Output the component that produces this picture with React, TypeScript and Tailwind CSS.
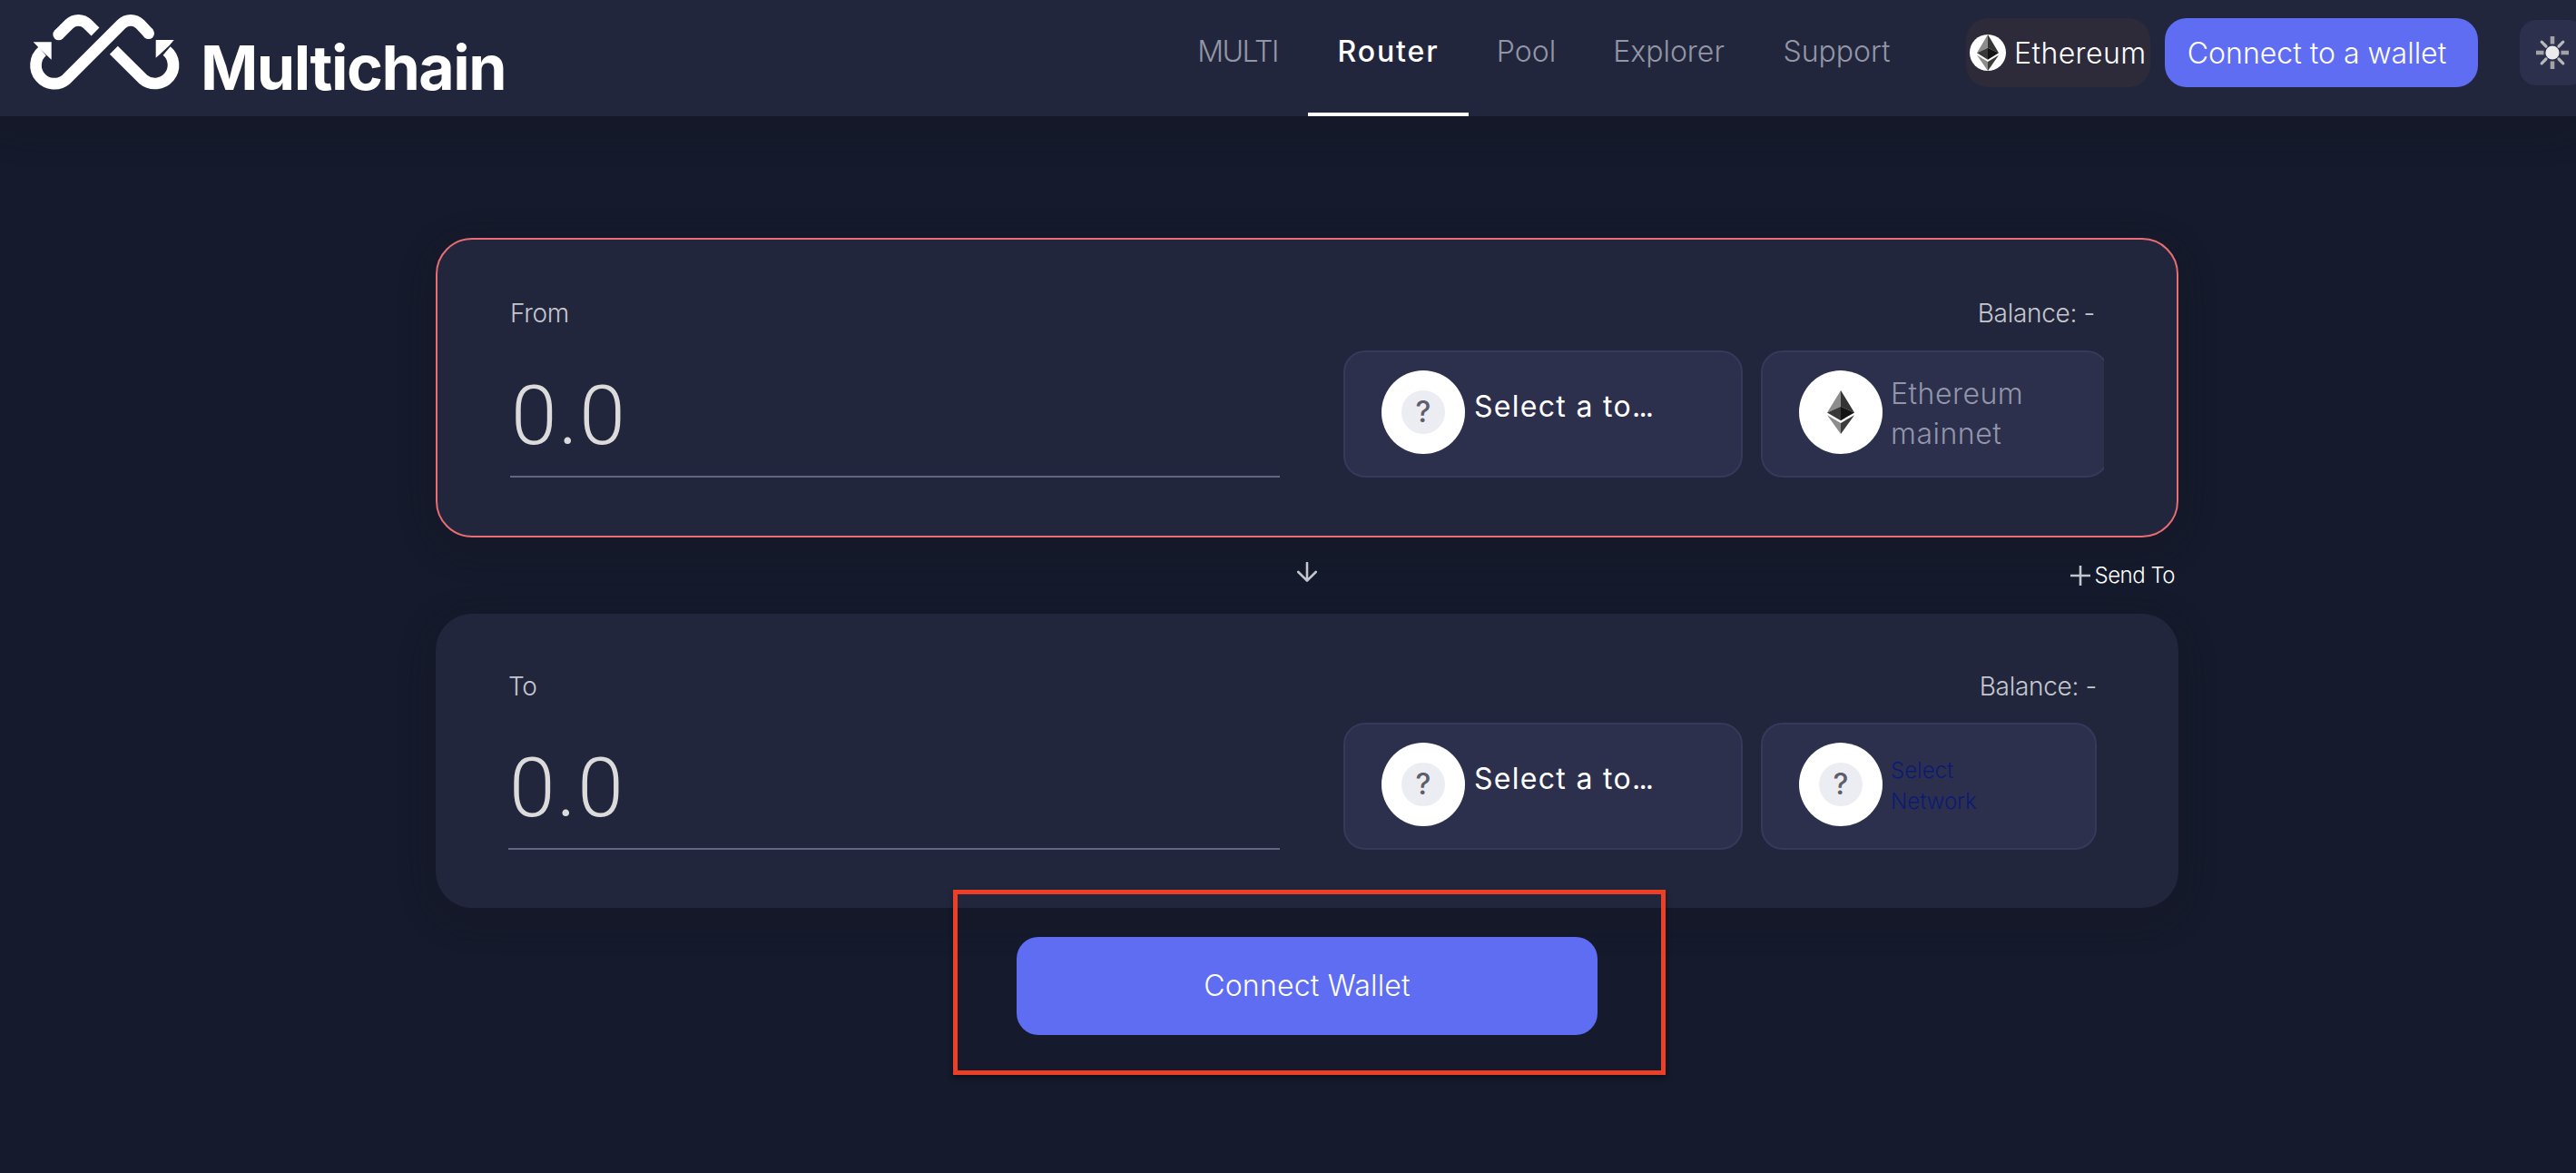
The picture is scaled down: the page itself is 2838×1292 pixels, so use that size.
import React from 'react';

const NAV_ITEMS = [
  { label: 'MULTI', box: 'w-[153px] pr-[2px] tracking-[-1.5px]' },
  { label: 'Router', box: 'w-[177px] tracking-[1.9px]', active: true },
  { label: 'Pool', box: 'w-[129px] pr-[2px]' },
  { label: 'Explorer', box: 'w-[185px] pr-[2px]' },
  { label: 'Support', box: 'w-[184px] pr-px' },
];

const LogoMark = () => (
  <svg viewBox="36 48 501 252" className="w-[167px] h-[84px] mt-4" fill="none" stroke="#fff" strokeWidth="38">
    <path d="M134 114L168.600 79.600A43 43 0 0 1 229.400 79.600L255 105" />
    <path d="M80 169A61 61 0 1 0 159 262L341.600 79.600A43 43 0 0 1 402.400 79.600L431 110" />
    <path d="M316 166L413 262A61 61 0 1 0 491 168" />
    <g fill="#fff" stroke="none">
      <circle cx="134" cy="114" r="19" />
      <circle cx="431" cy="110" r="19" />
      <path d="M50 139H110V197L94 182L66 155Z" />
      <path d="M515 132H455V191L471 177L500 150Z" />
    </g>
  </svg>
);

const EthIcon: React.FC<{ className?: string }> = ({ className }) => (
  <svg viewBox="0 0 256 417" className={className} preserveAspectRatio="none">
    <path fill="#343434" d="M128 0L256 212L128 154Z" />
    <path fill="#8c8c8c" d="M128 0L0 212L128 154Z" />
    <path fill="#141414" d="M128 154L256 212L128 288Z" />
    <path fill="#393939" d="M128 154L0 212L128 288Z" />
    <path fill="#3c3c3b" d="M128 312L256 237L128 417Z" />
    <path fill="#8c8c8c" d="M128 312L0 237L128 417Z" />
  </svg>
);

const SunIcon = () => (
  <svg viewBox="0 0 36 36" className="w-9 h-9">
    <g stroke="#a3a3a6" strokeWidth="4.600">
      <path d="M18 0V8.500M18 27.500V36M0 18H8.500M27.500 18H36" />
    </g>
    <g stroke="#b9b9b8" strokeWidth="3.200" strokeLinecap="round">
      <path d="M6.200 6.200L11 11M29.800 6.200L25 11M6.200 29.800L11 25M29.800 29.800L25 25" />
    </g>
    <circle cx="18" cy="18" r="7.600" fill="#ebebeb" />
  </svg>
);

const Header = () => (
  <header className="relative flex h-[128px] bg-[#22263c] shadow-[0_10px_40px_rgba(24,20,34,0.3)]">
    <div className="flex pl-8">
      <LogoMark />
      <span className="ml-[22px] mt-[34px] h-20 text-[68px] leading-[80px] font-bold tracking-[-1.5px] text-white">Multichain</span>
    </div>

    <div className="flex ml-auto -mr-[10px] shrink-0">
      <nav className="flex">
        {NAV_ITEMS.map((item) => (
          <a
            key={item.label}
            className={`flex h-[128px] items-center justify-center pb-[11px] border-b-4 text-[32px] ${item.box} ${item.active ? 'border-white text-white font-medium' : 'border-transparent text-[#9296a6] font-light'}`}
          >
            {item.label}
          </a>
        ))}
      </nav>

      <button className="ml-[50px] mt-5 flex h-[76px] w-[203px] items-center rounded-[24px] bg-[#2d2a3a] pl-1 text-[32px] font-light text-white">
        <span className="flex h-10 w-10 shrink-0 items-center justify-center rounded-full bg-white">
          <EthIcon className="h-10 w-6" />
        </span>
        <span className="ml-[9px] pt-[2px] tracking-[0.4px]">Ethereum</span>
      </button>

      <button className="ml-4 mt-5 h-[76px] w-[345px] rounded-[24px] bg-[#5f6df3] pt-[2px] pr-[10px] text-[32px] font-light text-white whitespace-nowrap">
        Connect to a wallet
      </button>

      <button className="ml-[46px] mt-[22px] flex h-[72px] w-[72px] items-center justify-center rounded-[18px] bg-[#2c304d]">
        <SunIcon />
      </button>
    </div>
  </header>
);

const Coin: React.FC<{ eth?: boolean }> = ({ eth }) => (
  <span className="mb-1 flex h-[92px] w-[92px] shrink-0 items-center justify-center rounded-full bg-white">
    {eth ? (
      <EthIcon className="h-12 w-[30px]" />
    ) : (
      <span className="flex h-12 w-12 items-center justify-center rounded-full bg-[#ecedf2] text-[32px] leading-none font-medium text-[#5d5d6c]">?</span>
    )}
  </span>
);

interface SwapCardProps {
  label: string;
  card: string;
  labelRow: string;
  network: React.ReactNode;
}

const SwapCard: React.FC<SwapCardProps> = ({ label, card, labelRow, network }) => (
  <section className={`w-[1920px] rounded-[40px] bg-[#22263c] px-20 pt-[60px] shadow-[0_10px_40px_rgba(24,20,34,0.3)] ${card}`}>
    <div className={`mb-5 flex items-center justify-between text-[28px] font-light tracking-[-0.3px] text-[#c5c7ce] ${labelRow}`}>
      <span>{label}</span>
      <span className="pb-px">Balance: -</span>
    </div>
    <div className="flex overflow-hidden">
      <div className="flex h-[140px] flex-1 items-center border-b-2 border-[#5f6880] pl-px pt-[7px] font-[Roboto] text-[91px] leading-none font-[350] tracking-[1.5px] text-[#dbdbdb]">
        0.0
      </div>
      <button className="ml-[70px] flex h-[140px] w-[440px] shrink-0 items-center rounded-[24px] border-2 border-[#353a5a] bg-[#2c304d] pl-10">
        <Coin />
        <span className="ml-[10px] mb-4 text-[32px] font-[430] tracking-[1.3px] text-white">
          Select a to<span className="tracking-[-1.8px]">...</span>
        </span>
      </button>
      {network}
    </div>
  </section>
);

export default function App() {
  return (
    <div className="h-[1292px] w-full overflow-hidden bg-[#151a2c] font-[Inter,sans-serif]">
      <Header />

      <main className="flex flex-col items-center pl-[42px] pt-[134px]">
        <SwapCard
          label="From"
          card="h-[330px] border-2 border-[#e96d72]"
          labelRow="h-[42px] pr-[10px]"
          network={
            <button className="-mr-[5px] ml-5 flex h-[140px] w-[383px] shrink-0 items-center rounded-[24px] border-2 border-[#353a5a] bg-[#2c304d] pl-10 text-left">
              <Coin eth />
              <span className="ml-[9px] w-[200px] text-[32px] leading-[44px] font-light tracking-[0.5px] text-[#9296ab]">Ethereum mainnet</span>
            </button>
          }
        />

        <div className="grid h-[84px] w-[1920px] grid-cols-3 items-center">
          <span />
          <svg viewBox="0 0 22 22" className="mx-auto mb-2 h-[22px] w-[22px]" fill="none" stroke="#c4c6ce" strokeWidth="2.600" strokeLinecap="round" strokeLinejoin="round">
            <path d="M11 1V20.500M1.300 11L11 20.700L20.700 11" />
          </svg>
          <div className="flex items-center justify-end pr-1 text-[24px] text-white">
            <svg viewBox="0 0 22 22" className="mr-1 h-[22px] w-[22px]" stroke="#c4c6ce" strokeWidth="2.600">
              <path d="M11 0V22M0 11H22" />
            </svg>
            <span className="font-light tracking-[-0.5px]">Send To</span>
          </div>
        </div>

        <SwapCard
          label="To"
          card="h-[324px]"
          labelRow="h-10 pr-[10px]"
          network={
            <button className="ml-5 mr-[10px] flex h-[140px] w-[370px] shrink-0 items-center rounded-[24px] border-2 border-[#353a5a] bg-[#2c304d] pl-10 text-left">
              <Coin />
              <span className="ml-[9px] w-[120px] text-[24px] leading-[34px] font-light text-[#0c1a75]">Select Network</span>
            </button>
          }
        />

        <div className="relative mt-8">
          <button className="h-[108px] w-[640px] rounded-[24px] bg-[#5f6df3] text-[32px] font-light tracking-[0.2px] text-white">Connect Wallet</button>
          <div className="pointer-events-none absolute -left-[70px] -top-[52px] h-[204px] w-[785px] border-[5px] border-[#eb3f26] shadow-[0_3px_6px_rgba(0,0,0,0.4)]" />
        </div>
      </main>
    </div>
  );
}
